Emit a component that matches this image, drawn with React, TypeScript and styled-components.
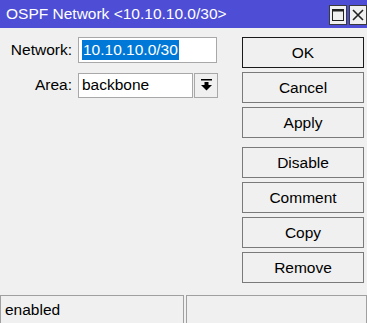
import styled, { createGlobalStyle } from "styled-components";

const GlobalStyle = createGlobalStyle`
  html, body {
    margin: 0;
    padding: 0;
    background: #f0f0f0;
  }
  body {
    font-family: "Liberation Sans", Arial, sans-serif;
    font-size: 15.5px;
    color: #000;
  }
`;

const Window = styled.div`
  width: 367px;
  height: 323px;
  display: flex;
  flex-direction: column;
  background: #f0f0f0;
  overflow: hidden;
`;

const TitleBar = styled.div`
  height: 28px;
  flex: none;
  background: #4d4dd5;
  display: flex;
  align-items: center;
  padding-left: 6px;
`;

const Title = styled.div`
  flex: 1;
  color: #fff;
  font-size: 15.5px;
  white-space: nowrap;
`;

const WinButtons = styled.div`
  display: flex;
  gap: 2px;
  align-self: flex-start;
  margin-top: 5px;
`;

const WinButton = styled.div`
  width: 16px;
  height: 18px;
  background: #f0f0f0;
  border: 1px solid #3a3a3a;
  display: flex;
  align-items: center;
  justify-content: center;
  flex: none;
`;

const Body = styled.div`
  flex: 1;
  display: flex;
  padding-top: 9px;
`;

const Form = styled.div`
  width: 242px;
  display: flex;
  flex-direction: column;
  gap: 9px;
`;

const Row = styled.div`
  display: flex;
  align-items: center;
  height: 26px;
`;

const Label = styled.div`
  width: 72px;
  text-align: right;
  margin-right: 6px;
`;

const Field = styled.div<{ $w: number; $h: number }>`
  width: ${(p) => p.$w}px;
  height: ${(p) => p.$h}px;
  box-sizing: border-box;
  background: #fff;
  border: 1px solid #a8a8a8;
  display: flex;
  align-items: center;
  padding-left: 3px;
`;

const Selected = styled.span`
  background: #0078d7;
  color: #fff;
  padding: 1px 1px;
`;

const DropButton = styled.div`
  width: 24px;
  height: 25px;
  box-sizing: border-box;
  margin-left: 1px;
  background: #f0f0f0;
  border: 1px solid #a8a8a8;
  display: flex;
  align-items: center;
  justify-content: center;
`;

const Buttons = styled.div`
  width: 122px;
  display: flex;
  flex-direction: column;
`;

const Group = styled.div`
  display: flex;
  flex-direction: column;
  gap: 4px;
  & + & {
    margin-top: 9px;
  }
`;

const Button = styled.div<{ $default?: boolean }>`
  height: 31px;
  box-sizing: border-box;
  background: #f0f0f0;
  border: 1px solid ${(p) => (p.$default ? "#1a1a1a" : "#7a7a7a")};
  display: flex;
  align-items: center;
  justify-content: center;
`;

const StatusBar = styled.div`
  height: 28px;
  flex: none;
  display: flex;
  gap: 2px;
`;

const StatusCell = styled.div<{ $w?: number }>`
  ${(p) => (p.$w ? `width: ${p.$w}px;` : "flex: 1;")}
  box-sizing: border-box;
  border: 1px solid #a0a0a0;
  border-bottom: none;
  display: flex;
  align-items: center;
  padding-left: 4px;
`;

export default function App() {
  return (
    <>
      <GlobalStyle />
      <Window>
        <TitleBar>
          <Title>OSPF Network &lt;10.10.10.0/30&gt;</Title>
          <WinButtons>
            <WinButton>
              <svg width="12" height="12" viewBox="0 0 12 12">
                <rect x="0.5" y="0.5" width="11" height="11" fill="none" stroke="#222" />
                <line x1="0" y1="1.5" x2="12" y2="1.5" stroke="#222" strokeWidth="2" />
              </svg>
            </WinButton>
            <WinButton>
              <svg width="12" height="12" viewBox="0 0 12 12">
                <path d="M1 1 L11 11 M11 1 L1 11" stroke="#222" strokeWidth="1.6" />
              </svg>
            </WinButton>
          </WinButtons>
        </TitleBar>
        <Body>
          <Form>
            <Row>
              <Label>Network:</Label>
              <Field $w={139} $h={26}>
                <Selected>10.10.10.0/30</Selected>
              </Field>
            </Row>
            <Row>
              <Label>Area:</Label>
              <Field $w={115} $h={25}>backbone</Field>
              <DropButton>
                <svg width="11" height="12" viewBox="0 0 11 12">
                  <rect x="0" y="0" width="11" height="1.5" fill="#000" />
                  <rect x="3.5" y="3" width="4" height="3" fill="#000" />
                  <path d="M0 6 L11 6 L5.5 11.5 Z" fill="#000" />
                </svg>
              </DropButton>
            </Row>
          </Form>
          <Buttons>
            <Group>
              <Button $default>OK</Button>
              <Button>Cancel</Button>
              <Button>Apply</Button>
            </Group>
            <Group>
              <Button>Disable</Button>
              <Button>Comment</Button>
              <Button>Copy</Button>
              <Button>Remove</Button>
            </Group>
          </Buttons>
        </Body>
        <StatusBar>
          <StatusCell $w={184}>enabled</StatusCell>
          <StatusCell />
        </StatusBar>
      </Window>
    </>
  );
}
